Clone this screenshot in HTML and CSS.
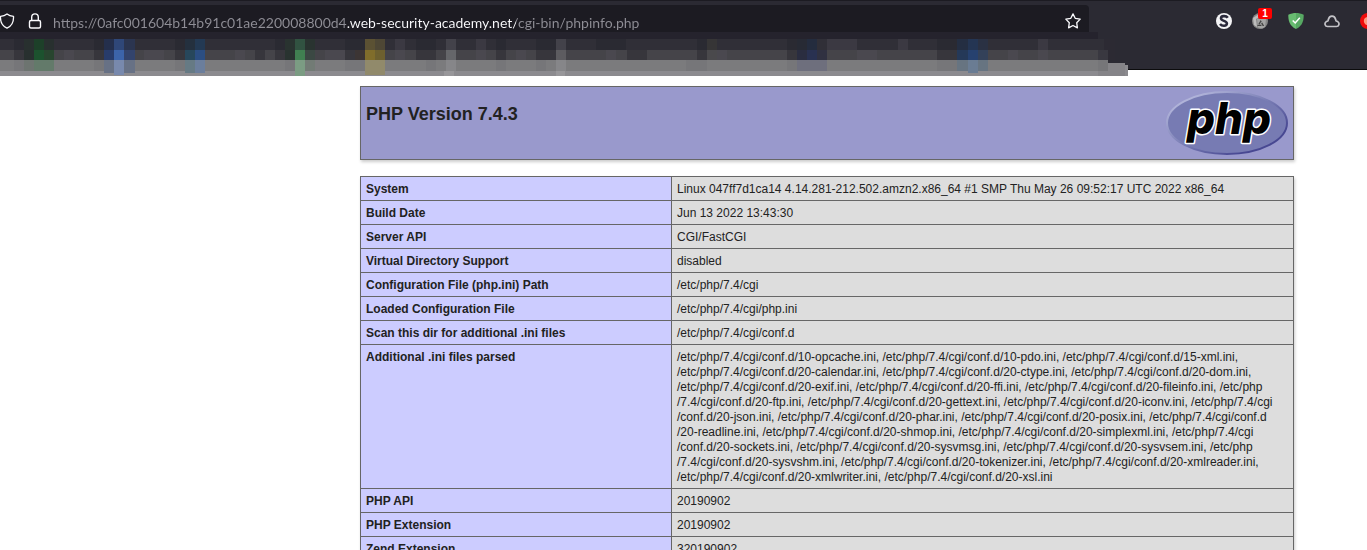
FILE: index.html
```html
<!DOCTYPE html>
<html lang="en">
<head>
<meta charset="utf-8">
<title>PHP 7.4.3 - phpinfo()</title>
<link rel="stylesheet" href="styles.css">
</head>
<body>
<header class="toolbar">
  <div class="nav">
    <div class="urlbar">
      <button class="icon-btn shield" aria-label="Tracking protection"><svg width="16" height="16" viewBox="0 0 16 16"><path d="M8 1C6 2.600 3.500 3.200 1.500 3.400C1.200 8.500 3 13 8 15.200C13 13 14.800 8.500 14.500 3.400C12.500 3.200 10 2.600 8 1Z" fill="none" stroke="#fbfbfe" stroke-width="1.300" stroke-linejoin="round"/></svg></button>
      <button class="icon-btn" aria-label="Connection security"><svg width="16" height="16" viewBox="0 0 16 16"><rect x="2.500" y="7.500" width="11" height="7.500" rx="1.500" fill="none" stroke="#fbfbfe" stroke-width="1.400"/><path d="M4.700 7.500V4.200a3.300 3.300 0 0 1 6.600 0V7.500" fill="none" stroke="#fbfbfe" stroke-width="1.400"/></svg></button>
      <input class="url" type="text" aria-label="Address" value="https://0afc001604b14b91c01ae220008800d4.web-security-academy.net/cgi-bin/phpinfo.php" spellcheck="false">
      <button class="icon-btn" aria-label="Bookmark this page"><svg width="16" height="16" viewBox="0 0 16 16"><path d="M8 .9L10.200 5.300L15.200 6.100L11.700 9.700L12.400 14.800L8 12.500L3.600 14.800L4.300 9.700L.8 6.100L5.800 5.300Z" fill="none" stroke="#fbfbfe" stroke-width="1.300" stroke-linejoin="round"/></svg></button>
    </div>
    <div class="extensions">
      <button class="icon-btn" aria-label="S extension"><svg width="16" height="16" viewBox="0 0 16 16"><circle cx="8" cy="8" r="8" fill="#f4f4f6"/><path d="M11.800 4.800C10 2.300 4.900 2.600 5 5.500C5.200 8.300 11 7.500 10.900 10.500C10.700 13.500 6 13.500 4 11" fill="none" stroke="#2b2a3b" stroke-width="2.600"/></svg></button>
      <button class="icon-btn has-badge" aria-label="Cookie cleaner"><svg width="16" height="16" viewBox="0 0 16 16"><circle cx="8" cy="8" r="8" fill="#858585"/><path d="M1 5L7 1L8 4L4 6L5 14L2 12Z" fill="#bdbdbd"/><path d="M5 6h9l-1 8-3 1.500-4-1Z" fill="#a3a3a3"/><path d="M8.700 8.300L6.300 12.300H11.100Z" fill="none" stroke="#444" stroke-width="1.300" stroke-dasharray="3.400 1"/></svg><span class="badge">1</span></button>
      <button class="icon-btn" aria-label="Ad blocker"><svg width="16" height="16" viewBox="0 0 16 16"><path d="M8 0C5.500 0 2.500.6.3 1.700C.3 7 1 12.500 8 16V0Z" fill="#68bc71"/><path d="M8 0C10.500 0 13.500.6 15.700 1.700C15.700 7 15 12.500 8 16V0Z" fill="#57a863"/><path d="M4.700 7.500L7.200 10L11.800 4.700" fill="none" stroke="#fff" stroke-width="1.500"/></svg></button>
      <button class="icon-btn" aria-label="Cloud"><svg width="16" height="16" viewBox="0 0 16 16"><path d="M3.500 13.500C1 13.500.2 10.200 2 8.800C2.700 8.200 3.600 8.300 4 7.700C4.500 6.500 4.300 3.200 8 3.200C11.700 3.200 11.500 6.500 12 7.700C12.400 8.300 13.300 8.200 14 8.800C15.800 10.200 15 13.500 12.500 13.500Z" fill="none" stroke="#c3c2c7" stroke-width="1.700"/></svg></button>
      <button class="icon-btn" aria-label="Recorder"><svg width="16" height="16" viewBox="0 0 16 16"><circle cx="8" cy="8" r="8" fill="#f00b0b"/><circle cx="8" cy="8" r="4.200" fill="#ff9a80"/></svg></button>
    </div>
  </div>
  <svg class="bookmarks" width="1128" height="44" viewBox="0 32 1128 44" shape-rendering="crispEdges" aria-hidden="true">
    <path fill="#25232d" d="M0 32H1098V39H0Z"/>
    <path fill="#302f37" d="M0 39H1108V50H0Z"/><path fill="#2c2a33" d="M1104 39h11v21h-11z"/>
    <path fill="#454449" d="M0 50H1098V60H0Z"/><path fill="#393840" d="M1098 50h10v10h-10z"/>
    <path fill="#7b7b7d" d="M0 60H1108V71H0Z"/>
    <path fill="#858488" d="M1108 63H1125V76H1108Z"/>
    <path fill="#8c8b8f" d="M0 71H1108V76H0ZM1125 65h3v11h-3z"/>
    <g fill="#24222b" fill-opacity=".4"><path d="M14 39h20v21h-20zM94 39h10v21h-10zM175 39h10v21h-10zM275 39h20v21h-20zM345 39h20v21h-20zM416 39h20v21h-20zM496 39h10v21h-10zM536 39h20v21h-20zM627 50h20v10h-20zM697 39h10v21h-10zM787 39h10v21h-10zM937 39h20v21h-20zM255 50h10v10h-10zM596 39h30v11h-30z"/></g>
    <g fill="#55535e" fill-opacity=".3"><path d="M64 50h10v10h-10zM144 50h20v10h-20zM235 50h10v10h-10zM325 50h20v10h-20zM395 39h10v21h-10zM476 39h10v21h-10zM516 50h10v10h-10zM606 50h10v10h-10zM717 50h10v10h-10zM827 39h30v11h-30zM857 50h20v10h-20zM898 39h10v11h-10zM1008 50h10v10h-10zM1038 39h10v21h-10z"/></g>
    <g fill="#5b5960" fill-opacity=".14"><path d="M14 60h20v11h-20zM94 60h10v11h-10zM175 60h10v11h-10zM285 60h10v11h-10zM345 60h20v11h-20zM426 60h10v11h-10zM496 60h10v11h-10zM536 60h10v11h-10zM686 60h21v11h-21zM787 60h10v11h-10zM937 60h20v11h-20zM1098 60h10v16h-10z"/></g>
    <path fill="#28302f" d="M24 39h10v21h-10zM44 39h10v11h-10z"/><path fill="#1d4029" d="M34 39h10v11h-10z"/><path fill="#1c522e" d="M34 50h10v10h-10z"/><path fill="#28452f" d="M44 50h10v10h-10z"/><path fill="#637a6a" d="M34 60h20v11h-20z"/><path fill="#6d7470" d="M24 60h10v11h-10z"/>
    <path fill="#242f4c" d="M104 39h10v11h-10z"/><path fill="#2f4778" d="M114 39h10v11h-10z"/><path fill="#2b3550" d="M124 39h11v11h-11z"/><path fill="#283c6b" d="M104 50h10v10h-10z"/><path fill="#3c64aa" d="M114 50h10v10h-10z"/><path fill="#33446d" d="M124 50h11v10h-11z"/><path fill="#677185" d="M104 60h10v13h-10zM124 60h11v13h-11z"/><path fill="#7889ad" d="M114 60h10v15h-10z"/>
    <path fill="#24303e" d="M185 39h10v11h-10z"/><path fill="#233953" d="M195 39h10v11h-10z"/><path fill="#27475b" d="M185 50h10v10h-10z"/><path fill="#2b4e82" d="M195 50h10v10h-10z"/><path fill="#667a84" d="M185 60h10v13h-10z"/><path fill="#6b7e9c" d="M195 60h10v13h-10z"/>
    <path fill="#293330" d="M285 39h10v21h-10zM305 39h10v11h-10z"/><path fill="#315241" d="M295 39h10v11h-10z"/><path fill="#408051" d="M295 50h10v10h-10z"/><path fill="#3b4843" d="M305 50h10v10h-10z"/><path fill="#7b9c83" d="M295 60h10v16h-10z"/><path fill="#727b75" d="M305 60h10v11h-10z"/>
    <path fill="#3c3534" d="M355 50h10v10h-10z"/><path fill="#5b5133" d="M365 39h10v11h-10z"/><path fill="#4e4735" d="M375 39h10v11h-10z"/><path fill="#806d2b" d="M365 50h10v10h-10z"/><path fill="#6d602f" d="M375 50h10v10h-10z"/><path fill="#918a6b" d="M365 60h20v15h-20z"/>
    <path fill="#43424a" d="M446 39h10v11h-10zM556 39h10v11h-10z"/><path fill="#65666a" d="M446 50h10v10h-10z"/><path fill="#5d5c60" d="M556 50h10v10h-10z"/><path fill="#868689" d="M446 60h10v11h-10zM556 60h10v11h-10z"/><path fill="#98979a" d="M444 71h10v5h-10zM556 71h9v5h-9z"/>
    <path fill="#363536" d="M707 39h10v11h-10z"/><path fill="#4a494c" d="M707 50h10v10h-10z"/>
    <path fill="#272a34" d="M797 39h10v11h-10z"/><path fill="#242c3e" d="M807 39h10v11h-10z"/><path fill="#2a2d40" d="M797 50h10v10h-10z"/><path fill="#293151" d="M807 50h10v10h-10z"/><path fill="#303141" d="M817 50h10v10h-10z"/><path fill="#6e6f7d" d="M797 60h30v11h-30z"/>
    <path fill="#242e42" d="M957 39h11v11h-11z"/><path fill="#243553" d="M968 39h10v11h-10z"/><path fill="#2a3143" d="M978 39h10v11h-10z"/><path fill="#253958" d="M957 50h11v10h-11z"/><path fill="#26416f" d="M968 50h10v10h-10z"/><path fill="#334159" d="M978 50h10v10h-10z"/><path fill="#677481" d="M957 60h11v11h-11zM978 60h10v11h-10z"/><path fill="#6a7c93" d="M968 60h10v13h-10z"/>
  </svg>
</header>
<main class="page">
  <div class="banner">
    <h1>PHP Version 7.4.3</h1>
    <svg class="logo" width="122" height="64" viewBox="0 0 122 64" role="img" aria-label="PHP logo">
      <defs>
        <linearGradient id="rim" x1="0" y1="0" x2="1" y2="1"><stop offset=".15" stop-color="#b0b3d9"/><stop offset=".5" stop-color="#777bb3"/><stop offset=".8" stop-color="#484892"/></linearGradient>
      </defs>
      <ellipse cx="61" cy="32" rx="60" ry="31" fill="#777bb3" stroke="url(#rim)" stroke-width="2"/>
      <text class="logo-text" x="63" y="43" text-anchor="middle">php</text>
    </svg>
  </div>
  <table class="info">
    <tbody>
      <tr><th scope="row">System</th><td>Linux 047ff7d1ca14 4.14.281-212.502.amzn2.x86_64 #1 SMP Thu May 26 09:52:17 UTC 2022 x86_64</td></tr>
      <tr><th scope="row">Build Date</th><td>Jun 13 2022 13:43:30</td></tr>
      <tr><th scope="row">Server API</th><td>CGI/FastCGI</td></tr>
      <tr><th scope="row">Virtual Directory Support</th><td>disabled</td></tr>
      <tr><th scope="row">Configuration File (php.ini) Path</th><td>/etc/php/7.4/cgi</td></tr>
      <tr><th scope="row">Loaded Configuration File</th><td>/etc/php/7.4/cgi/php.ini</td></tr>
      <tr><th scope="row">Scan this dir for additional .ini files</th><td>/etc/php/7.4/cgi/conf.d</td></tr>
      <tr><th scope="row">Additional .ini files parsed</th><td>/etc/php/7.4/cgi/conf.d/10-opcache.ini, /etc/php/7.4/cgi/conf.d/10-pdo.ini, /etc/php/7.4/cgi/conf.d/15-xml.ini,<br>/etc/php/7.4/cgi/conf.d/20-calendar.ini, /etc/php/7.4/cgi/conf.d/20-ctype.ini, /etc/php/7.4/cgi/conf.d/20-dom.ini,<br>/etc/php/7.4/cgi/conf.d/20-exif.ini, /etc/php/7.4/cgi/conf.d/20-ffi.ini, /etc/php/7.4/cgi/conf.d/20-fileinfo.ini, /etc/php<br>/7.4/cgi/conf.d/20-ftp.ini, /etc/php/7.4/cgi/conf.d/20-gettext.ini, /etc/php/7.4/cgi/conf.d/20-iconv.ini, /etc/php/7.4/cgi<br>/conf.d/20-json.ini, /etc/php/7.4/cgi/conf.d/20-phar.ini, /etc/php/7.4/cgi/conf.d/20-posix.ini, /etc/php/7.4/cgi/conf.d<br>/20-readline.ini, /etc/php/7.4/cgi/conf.d/20-shmop.ini, /etc/php/7.4/cgi/conf.d/20-simplexml.ini, /etc/php/7.4/cgi<br>/conf.d/20-sockets.ini, /etc/php/7.4/cgi/conf.d/20-sysvmsg.ini, /etc/php/7.4/cgi/conf.d/20-sysvsem.ini, /etc/php<br>/7.4/cgi/conf.d/20-sysvshm.ini, /etc/php/7.4/cgi/conf.d/20-tokenizer.ini, /etc/php/7.4/cgi/conf.d/20-xmlreader.ini,<br>/etc/php/7.4/cgi/conf.d/20-xmlwriter.ini, /etc/php/7.4/cgi/conf.d/20-xsl.ini</td></tr>
      <tr><th scope="row">PHP API</th><td>20190902</td></tr>
      <tr><th scope="row">PHP Extension</th><td>20190902</td></tr>
      <tr><th scope="row">Zend Extension</th><td>320190902</td></tr>
    </tbody>
  </table>
</main>
</body>
</html>
```
FILE: styles.css
```css
* { box-sizing: border-box; }
body {
  margin: 0;
  height: 100vh;
  display: flex;
  flex-direction: column;
  overflow: hidden;
  background: #fff;
  color: #222;
  font-family: "Liberation Sans", Arial, sans-serif;
}
.toolbar {
  position: relative;
  flex: none;
  height: 70px;
  padding-top: 4px;
  background: #2b2a33;
  border-top: 1px solid #1c1b22;
  border-bottom: 1px solid #0c0c0d;
}
.nav { display: flex; }
.urlbar {
  flex: 1;
  display: flex;
  align-items: center;
  height: 32px;
  padding-right: 8px;
  background: #1c1b22;
  border-radius: 0 4px 4px 0;
}
.icon-btn {
  display: flex;
  flex: none;
  padding: 0;
  border: 0;
  background: none;
  position: relative;
}
.shield { margin-left: -1px; margin-right: 12px; }
.url {
  flex: 1;
  min-width: 0;
  height: 24px;
  margin-left: 10px;
  padding: 2px 0 0;
  border: 0;
  outline: 0;
  font: 14px/22px Lato, "Noto Sans", sans-serif;
  color: transparent;
  caret-color: #fbfbfe;
  background: linear-gradient(90deg, #8f8e96 294px, #fbfbfe 294px, #fbfbfe 463px, #8f8e96 463px);
  -webkit-background-clip: text;
  background-clip: text;
}
.extensions {
  flex: none;
  display: flex;
  align-items: center;
  gap: 20px;
  width: 278px;
  padding-left: 127px;
  overflow: hidden;
}
.badge {
  position: absolute;
  top: -5px;
  left: 6px;
  width: 14px;
  height: 11px;
  border-radius: 2px;
  background: #f00;
  color: #fff;
  font: bold 10px/11px "Liberation Sans", sans-serif;
  text-align: center;
}
.bookmarks { position: absolute; left: 0; top: 31px; }
.page {
  flex: 1;
  min-height: 0;
  overflow: hidden;
  padding: 16px 73px 0 360px;
}
.banner {
  display: flex;
  justify-content: space-between;
  align-items: flex-start;
  margin-bottom: 16px;
  padding: 4px 5px;
  border: 1px solid #666;
  background: #99c;
  box-shadow: 1px 2px 3px #ccc;
}
h1 { margin: 12px 0 0; font-size: 18px; line-height: 22px; }
.logo-text {
  font: italic 800 44px Inter, sans-serif;
  fill: #000;
  stroke: #fff;
  stroke-width: 3px;
  paint-order: stroke;
  stroke-linejoin: round;
}
.info {
  width: 100%;
  border-collapse: collapse;
  box-shadow: 1px 2px 3px #ccc;
  font-size: 12px;
  line-height: 15px;
}
.info th, .info td {
  padding: 5px 5px 3px;
  border: 1px solid #666;
  text-align: left;
  vertical-align: top;
}
.info th { width: 311px; background: #ccf; }
.info td { background: #ddd; white-space: nowrap; }
```
